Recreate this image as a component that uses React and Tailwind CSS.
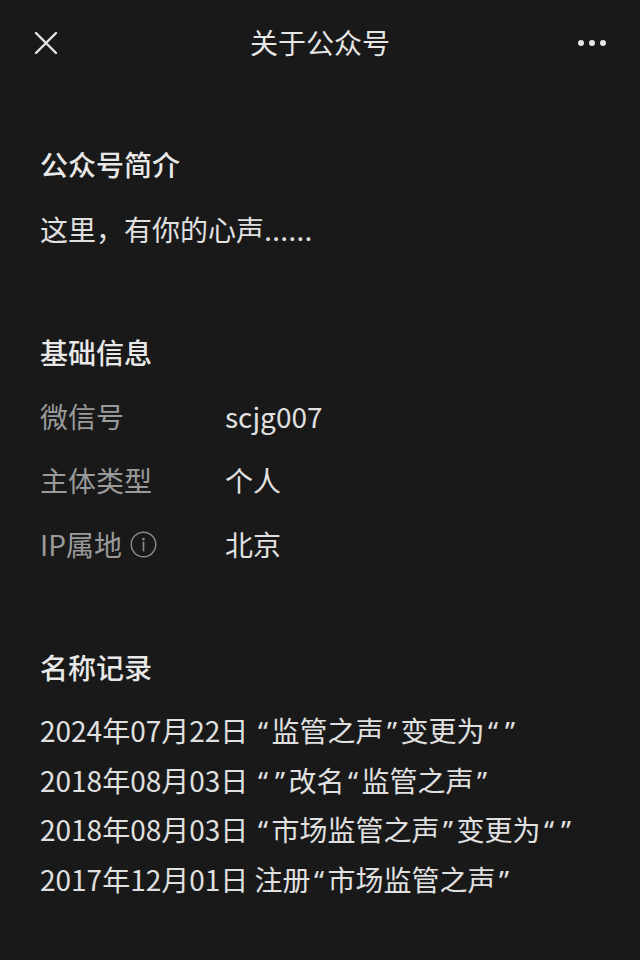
const cjk = { fontFamily: '"Noto Sans CJK SC", "Noto Sans", sans-serif' };
const latin = { fontFamily: 'Inter, "Noto Sans", sans-serif' };
const quoteFont = { fontFamily: '"Noto Sans", "Liberation Sans", sans-serif' };

// PingFang-style proportional quotes: render each one in a narrow box
function Quoted({ text }) {
  const parts = text.split(/([“”])/);
  return (
    <>
      {parts.map((p, i) =>
        p === '“' || p === '”' ? (
          <span key={i} className="inline-block w-[17px] text-center leading-none" style={quoteFont}>
            {p}
          </span>
        ) : (
          <span key={i}>{p}</span>
        )
      )}
    </>
  );
}

export default function App() {
  const info = [
    { label: '微信号', value: 'scjg007' },
    { label: '主体类型', value: '个人' },
    { label: 'IP属地', value: '北京', info: true },
  ];
  const records = [
    '2024年07月22日 “监管之声”变更为“”',
    '2018年08月03日 “”改名“监管之声”',
    '2018年08月03日 “市场监管之声”变更为“”',
    '2017年12月01日 注册“市场监管之声”',
  ];

  return (
    <div className="min-h-[960px] w-[640px] bg-[#191919] text-[#e8e8e8]" style={cjk}>
      {/* Top bar */}
      <header className="relative flex h-[86px] items-center justify-between px-[34px]">
        <svg width="24" height="24" viewBox="0 0 24 24" className="text-[#e6e6e6]">
          <path d="M2 2 L22 22 M22 2 L2 22" stroke="currentColor" strokeWidth="2.4" strokeLinecap="round" />
        </svg>
        <h1 className="absolute left-1/2 top-[22px] -translate-x-1/2 text-[28px] leading-[40px] text-[#e6e6e6]">关于公众号</h1>
        <div className="flex items-center gap-[5px]">
          <span className="h-[6px] w-[6px] rounded-full bg-[#e6e6e6]" />
          <span className="h-[6px] w-[6px] rounded-full bg-[#e6e6e6]" />
          <span className="h-[6px] w-[6px] rounded-full bg-[#e6e6e6]" />
        </div>
      </header>

      <main className="px-10">
        {/* Intro */}
        <section className="mt-[58px]">
          <h2 className="text-[28px] font-medium leading-[40px] text-[#e8e8e8]">公众号简介</h2>
          <p className="mt-[25px] text-[28px] leading-[40px] text-[#e0e0e0]">
            这里，有你的心声<span style={latin}>……</span>
          </p>
        </section>

        {/* Basic info */}
        <section className="mt-[81px]">
          <h2 className="text-[28px] font-medium leading-[40px] text-[#e8e8e8]">基础信息</h2>
          <div className="mt-6 flex flex-col gap-[24px]">
            {info.map((r) => (
              <div key={r.label} className="flex items-center text-[28px] leading-[40px]">
                <div className="flex w-[185px] items-center gap-[8px] text-[#9a9a9a]">
                  <span>{r.label}</span>
                  {r.info && (
                    <svg width="27" height="27" viewBox="0 0 26 26" className="text-[#8a8a8a]">
                      <circle cx="13" cy="13" r="11.8" fill="none" stroke="currentColor" strokeWidth="1.4" />
                      <circle cx="13" cy="7.8" r="1.3" fill="currentColor" />
                      <path d="M13 11 V19" stroke="currentColor" strokeWidth="1.6" strokeLinecap="round" />
                    </svg>
                  )}
                </div>
                <span className="text-[#e0e0e0]">{r.value}</span>
              </div>
            ))}
          </div>
        </section>

        {/* Name history */}
        <section className="mt-[83px]">
          <h2 className="text-[28px] font-medium leading-[40px] text-[#e8e8e8]">名称记录</h2>
          <ul className="mt-[19px]">
            {records.map((t) => (
              <li key={t} className="text-[28px] leading-[49.7px] text-[#e0e0e0]">
                <Quoted text={t} />
              </li>
            ))}
          </ul>
        </section>
      </main>
    </div>
  );
}
